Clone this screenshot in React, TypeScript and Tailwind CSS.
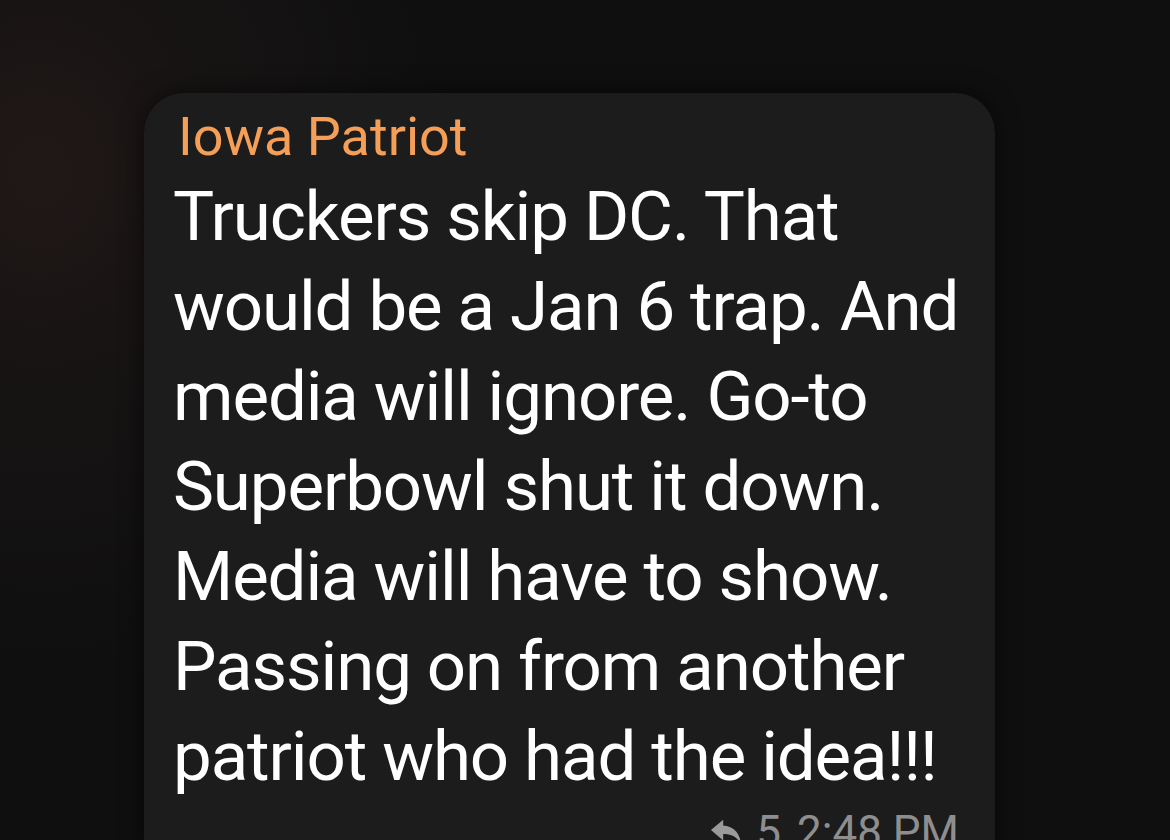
const ReplyIcon = () => (
  <svg width="32" height="30" viewBox="0 0 34 30" fill="currentColor">
    <path d="M14 2 L1 13 L14 24 L14 17 C22 17 28 19 33 28 C32 17 26 9 14 8 Z" />
  </svg>
);

const lines = [
  "Truckers skip DC. That",
  "would be a Jan 6 trap. And",
  "media will ignore. Go-to",
  "Superbowl shut it down.",
  "Media will have to show.",
  "Passing on from another",
  "patriot who had the idea!!!",
];

const App = () => {
  return (
    <div
      className="h-[840px] w-[1170px] overflow-hidden bg-[#0f0f0f] bg-[radial-gradient(ellipse_420px_520px_at_40px_170px,#201817_0%,#161313_45%,#0f0f0f_100%)] pt-[93px] pl-[144px]"
      style={{ fontFamily: "Roboto, 'Noto Sans', sans-serif" }}
    >
      <div className="w-[851px] rounded-[40px] bg-[#1c1c1c] pl-[29px] pr-[30px] pt-[14px] pb-8 shadow-[0_0_24px_rgba(0,0,0,0.6)]">
        <div className="text-[54px] leading-[60px] text-[#f59e57] pl-[5px]">Iowa Patriot</div>
        <p className="mt-[5px] text-[69px] leading-[90px] tracking-[-0.016em] text-white">
          {lines.map((l) => (
            <span key={l} className="block whitespace-nowrap">
              {l}
            </span>
          ))}
        </p>
        <div className="mt-[6px] flex items-center justify-end pr-[6px] text-[44px] leading-[48px] text-[#8e8e8e]">
          <span className="mr-[14px] text-[#9a9a9a]">
            <ReplyIcon />
          </span>
          <span>5</span>
          <span className="ml-[16px]">2:48 PM</span>
        </div>
      </div>
    </div>
  );
};

export default App;
